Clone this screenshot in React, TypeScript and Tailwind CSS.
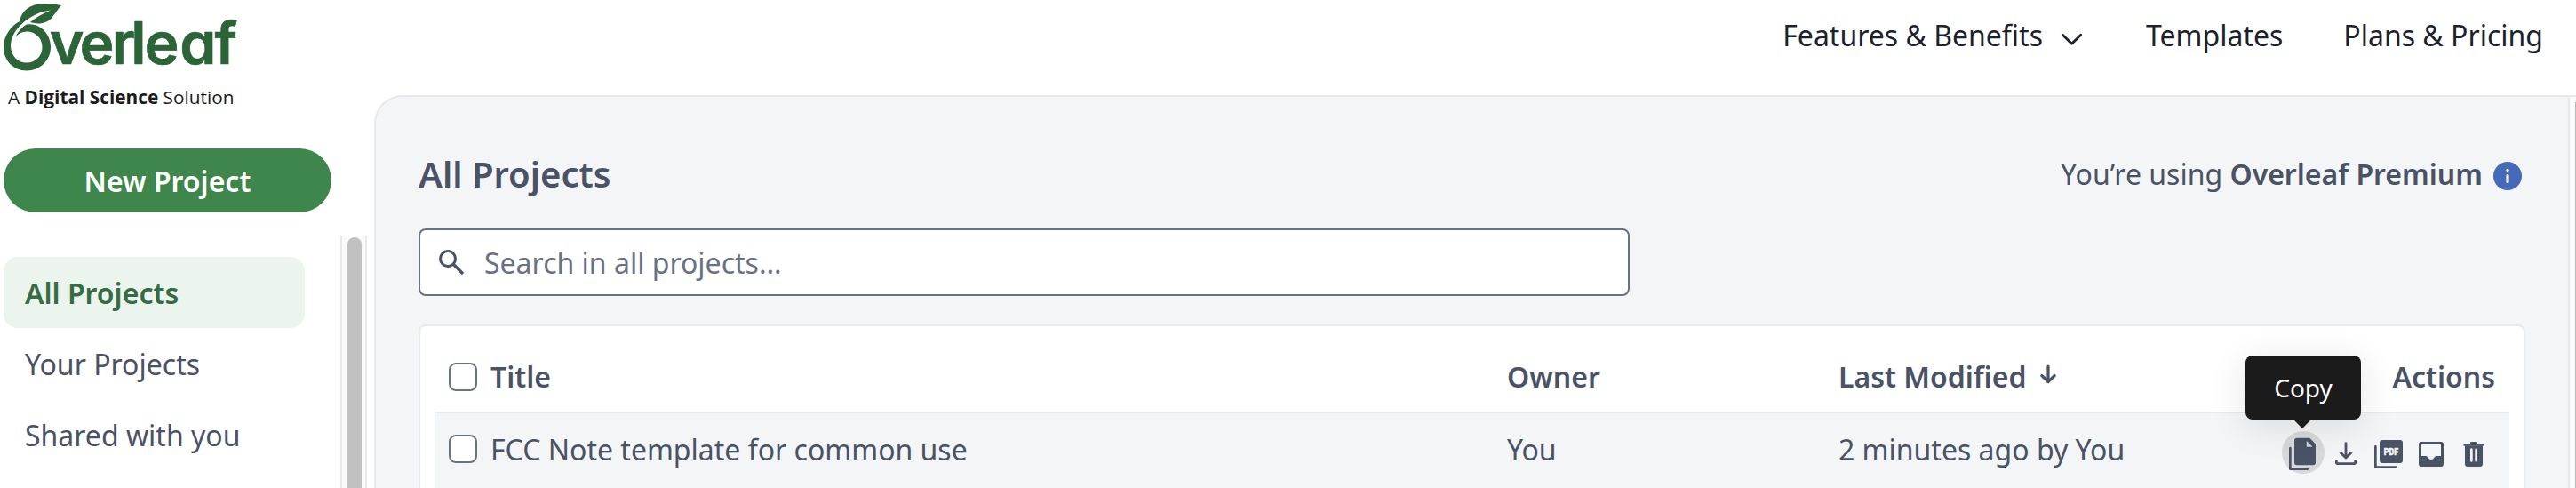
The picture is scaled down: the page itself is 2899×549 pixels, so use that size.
import React from "react";

function Logo() {
  return (
    <svg
      className="block h-[78px] w-[262px] shrink-0 overflow-visible"
      viewBox="4 3 262 78"
      fill="#2a6437"
      role="img"
    >
      <path d="M22 24C24 12 34 4.500 48 4C56 3.700 62 4.500 69 6C65 10 63 14 59 19C55 24.500 49 26.500 43 26.500C40 26.300 37 25.700 34 25C40 20 48 15 57 11.500C45 13 33 18.500 24 27.500C16 35 12 43 12 52C12.500 63 20 70.500 30 70.500C40 70.500 47.500 63 47.500 53C47.500 43 40 35.500 30 35.500C25 35.500 21 37.500 17.500 41.500C20 36 25 30 30 27.500C45 25.500 57 38 57 53C57 68 45 79.500 30 79.500C15 79.500 4 68 4 53C4 41 12 29 22 24Z" />
      <text
        x="55.800 89.500 125.700 147.200 162.600 202.200 241.500"
        y="71.800"
        stroke="#2a6437"
        strokeWidth="0.600"
        className="font-['Inter',sans-serif] text-[66px] font-semibold [font-feature-settings:'cv11']"
      >
        verleaf
      </text>
    </svg>
  );
}

function Checkbox() {
  return <span className="h-8 w-8 shrink-0 rounded-lg border-2 border-[#677283] bg-white" />;
}

function SearchIcon() {
  return (
    <svg className="h-12 w-12 shrink-0" viewBox="0 0 48 48" fill="none" stroke="#495365" strokeWidth="3">
      <circle cx="20" cy="20" r="8.500" />
      <path d="M26 26L37 37" strokeWidth="3.400" />
    </svg>
  );
}

function ActionIcon({ children, active = false }: { children: React.ReactNode; active?: boolean }) {
  return (
    <button className={active ? "h-12 w-12 rounded-full bg-[#d7d8d9]" : "h-12 w-12 rounded-full"}>
      <svg
        className="block h-12 w-12"
        viewBox="0 0 48 48"
        fill="#495365"
        strokeLinecap="round"
        strokeLinejoin="round"
      >
        {children}
      </svg>
    </button>
  );
}

function Tooltip() {
  return (
    <div className="absolute -top-[85px] -left-[41px] flex h-[72px] w-[130px] items-center justify-center rounded-lg bg-[#1b1b1b] text-[28px] leading-[40px] text-white shadow-[0_8px_40px_rgba(30,37,48,0.12)]">
      Copy
      <svg className="absolute top-[71px] left-[53px] h-[11px] w-[22px]" viewBox="0 0 22 11" fill="#1b1b1b">
        <path d="M0 0H22L11 11Z" />
      </svg>
    </div>
  );
}

function Actions() {
  return (
    <div className="flex">
      <div className="relative h-12 w-12">
        <ActionIcon active>
          <path
            fillRule="evenodd"
            d="M17 7.700H31.200L38 14.500V35.300a3 3 0 0 1-3 3H17a3 3 0 0 1-3-3V10.700a3 3 0 0 1 3-3ZM27.800 11V17.700H34.500Z"
          />
          <path d="M9.350 19V42.650H28.700" fill="none" stroke="#495365" strokeWidth="2.700" />
        </ActionIcon>
        <Tooltip />
      </div>
      <ActionIcon>
        <path
          d="M24 13.700V30M18.100 24.300L24 30.100L29.900 24.300M13.400 33.400V35.300a1.300 1.300 0 0 0 1.300 1.300H33.300a1.300 1.300 0 0 0 1.300-1.300V33.400"
          fill="none"
          stroke="#495365"
          strokeWidth="2.800"
        />
      </ActionIcon>
      <ActionIcon>
        <rect x="14" y="10" width="26" height="26" rx="3" />
        <path d="M9.350 17.300V40.650H32.700" fill="none" stroke="#495365" strokeWidth="2.700" />
        <text
          x="18.700"
          y="27"
          textLength="16.400"
          lengthAdjust="spacingAndGlyphs"
          fill="#f4f5f6"
          stroke="#f4f5f6"
          strokeWidth="0.500"
          className="font-['Roboto',sans-serif] text-[11.2px] font-black"
        >
          PDF
        </text>
      </ActionIcon>
      <ActionIcon>
        <path
          fillRule="evenodd"
          d="M13 12H35a3 3 0 0 1 3 3V37a3 3 0 0 1-3 3H13a3 3 0 0 1-3-3V15a3 3 0 0 1 3-3ZM13 15V28H18.200C19.600 28 19.900 29 20.600 30C21.500 31.300 22.600 32 24 32C25.400 32 26.500 31.300 27.400 30C28.100 29 28.400 28 29.800 28H35V15Z"
        />
      </ActionIcon>
      <ActionIcon>
        <path
          fillRule="evenodd"
          d="M14 16.500H34V37a3 3 0 0 1-3 3H17a3 3 0 0 1-3-3ZM20 20.500V33.500a1.350 1.350 0 0 0 2.700 0V20.500a1.350 1.350 0 0 0-2.700 0ZM25.300 20.500V33.500a1.350 1.350 0 0 0 2.700 0V20.500a1.350 1.350 0 0 0-2.700 0Z"
        />
        <path d="M13.700 14H20V13.400a1.400 1.400 0 0 1 1.400-1.400H26.600a1.400 1.400 0 0 1 1.400 1.400V14H34.500a1.400 1.400 0 0 1 0 2.800H13.700a1.400 1.400 0 0 1 0-2.800Z" />
      </ActionIcon>
    </div>
  );
}

function Sidebar() {
  return (
    <aside className="flex w-[421px] shrink-0 flex-col">
      <div className="flex h-[167px] shrink-0 flex-col pt-[3px] pl-1">
        <Logo />
        <p className="mt-[13px] ml-[5px] font-['Open_Sans',sans-serif] text-[20.8px] leading-[30px] whitespace-nowrap text-[#1b1b1b]">
          A <b className="font-bold">Digital Science</b> Solution
        </p>
      </div>
      <button className="ml-1 h-[72px] w-[369px] shrink-0 rounded-full bg-[#3e864b] pt-[2px] font-semibold text-white">
        New Project
      </button>
      <div className="mt-[26px] flex grow pl-1">
        <nav className="flex w-[379px] flex-col pt-6">
          <a className="flex h-20 w-[339px] items-center rounded-2xl bg-[#ebf5ed] px-6 pt-[2px] font-semibold text-[#366c44]">
            All Projects
          </a>
          <a className="flex h-20 items-center px-6 pt-[2px]">Your Projects</a>
          <a className="flex h-20 items-center px-6 pt-[2px]">Shared with you</a>
        </nav>
        <div className="flex w-[30px] border-x-2 border-[#e9e9e9] bg-[#fafafa] pt-[2px] pl-[6px]">
          <div className="w-4 rounded-t-full bg-[#c1c1c1]" />
        </div>
      </div>
    </aside>
  );
}

function Header() {
  return (
    <header className="flex h-[107px] shrink-0 items-start justify-end pt-4 pr-[37px] text-[#1b222c]">
      <a className="flex items-center">
        Features &amp; Benefits
        <svg
          className="mt-2 ml-5 h-[15px] w-[25px]"
          viewBox="0 0 25 15"
          fill="none"
          stroke="#1b222c"
          strokeWidth="2.800"
          strokeLinecap="round"
          strokeLinejoin="round"
        >
          <path d="M2.300 2.200L12.500 12.300L22.700 2.200" />
        </svg>
      </a>
      <a className="ml-[71px]">Templates</a>
      <a className="ml-[68px]">Plans &amp; Pricing</a>
    </header>
  );
}

function ProjectTable() {
  return (
    <section className="mt-8 h-[300px] w-[2371px] rounded-lg border-2 border-[#e7e9ee] bg-white px-4">
      <div className="flex h-[98px] items-center border-b-2 border-[#e7e9ee] pt-[19px] pb-[1px] pl-4 font-semibold">
        <Checkbox />
        <span className="ml-[15px] w-[1144px]">Title</span>
        <span className="w-[373px]">Owner</span>
        <span className="flex grow items-center">
          Last Modified
          <svg
            className="ml-[14px] h-6 w-[20px] -translate-y-[3px]"
            viewBox="0 0 20 24"
            fill="none"
            stroke="#495365"
            strokeWidth="3.200"
            strokeLinecap="round"
            strokeLinejoin="round"
          >
            <path d="M10 3.200V20M2.800 13.500L10 20.500L17.200 13.500" />
          </svg>
        </span>
        <span className="pr-4">Actions</span>
      </div>
      <div className="flex h-[90px] items-center bg-[#f4f5f6] pb-[10px] pl-4">
        <Checkbox />
        <span className="ml-[15px] w-[1144px] pt-[2px]">FCC Note template for common use</span>
        <span className="w-[373px] pt-[2px]">You</span>
        <span className="grow pt-[2px]">2 minutes ago by You</span>
        <div className="mt-2 pr-4">
          <Actions />
        </div>
      </div>
    </section>
  );
}

function ProjectPanel() {
  return (
    <main className="flex grow overflow-hidden rounded-tl-[32px] border-t-2 border-l-2 border-[#e7e9ec] bg-[#f4f5f7]">
      <div className="w-[2467px] shrink-0 pt-[63px] pl-12">
        <div className="flex h-12 w-[2369px] items-center justify-between">
          <h1 className="text-[40px] leading-[48px] font-semibold">All Projects</h1>
          <p className="flex items-center pr-[2px]">
            <span>
              You’re using <span className="font-semibold">Overleaf Premium</span>
            </span>
            <svg className="mt-[3px] ml-[12px] h-8 w-8" viewBox="0 0 32 32">
              <circle cx="16" cy="16" r="16" fill="#456ab9" />
              <circle cx="16" cy="9.500" r="1.700" fill="#f4f5f8" />
              <rect x="14.400" y="14" width="3.200" height="10" rx="1.600" fill="#f4f5f8" />
            </svg>
          </p>
        </div>
        <div className="mt-[37px] flex h-[76px] w-[1363px] items-center rounded-lg border-2 border-[#677283] bg-white pl-[11px] text-[#677283]">
          <SearchIcon />
          <span className="ml-[13px] pt-[2px]">Search in all projects...</span>
        </div>
        <ProjectTable />
      </div>
      <div className="flex grow border-l-2 border-[#e9e9e9] bg-[#fafafa] pt-[6px] pl-[6px]">
        <div className="w-[1px] bg-[#b9b9b9]" />
      </div>
    </main>
  );
}

export default function App() {
  return (
    <div className="flex h-[549px] w-[2899px] overflow-hidden bg-white font-['Noto_Sans',sans-serif] text-[32px] leading-[48px] text-[#495365]">
      <Sidebar />
      <div className="flex grow flex-col">
        <Header />
        <ProjectPanel />
      </div>
    </div>
  );
}
